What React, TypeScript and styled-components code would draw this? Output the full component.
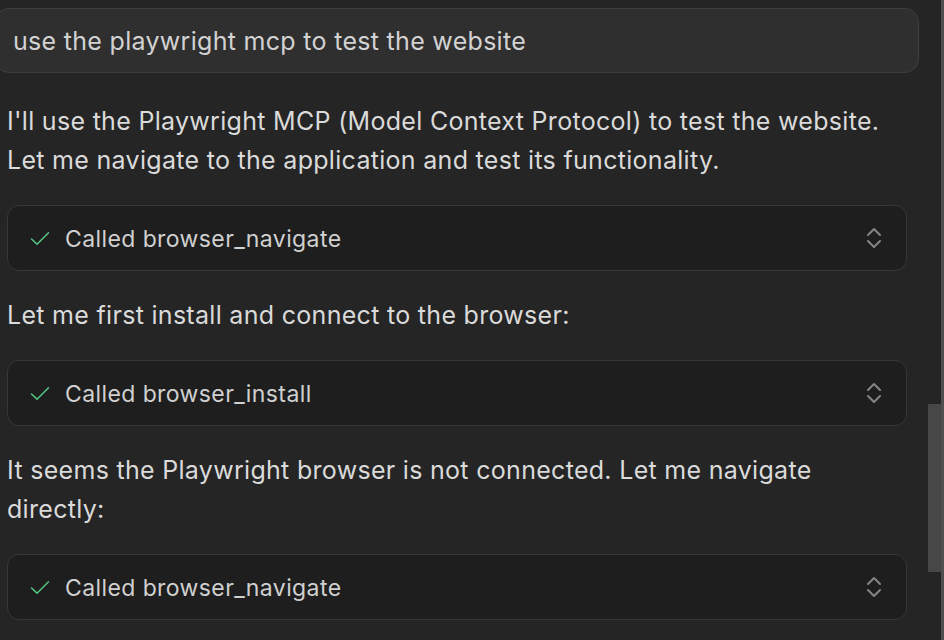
import React from "react";
import styled, { createGlobalStyle } from "styled-components";

const Global = createGlobalStyle`
  html, body { margin: 0; padding: 0; background: #252525; }
  body { font-family: Inter, "Noto Sans", sans-serif; -webkit-font-smoothing: antialiased; }
  #root { height: 640px; }
`;

const Frame = styled.div`
  display: flex;
  width: 944px;
  height: 640px;
  overflow: hidden;
  background: #252525;
`;

const Scroller = styled.div`
  position: relative;
  flex: 1;
  height: 640px;
  overflow: hidden;
`;

const EdgeStrip = styled.div`
  width: 3px;
  height: 640px;
  background: #4f4f4f;
`;

const Thumb = styled.div`
  position: absolute;
  right: 0;
  top: 404px;
  width: 13px;
  height: 168px;
  background: #474747;
`;

const Column = styled.div`
  display: flex;
  flex-direction: column;
  gap: 25px;
  width: 900px;
  padding: 8px 0 0 7px;
`;

const Prompt = styled.div`
  margin: 0 -12px 4px -12px;
  height: 63px;
  box-sizing: content-box;
  display: flex;
  align-items: center;
  padding-left: 17px;
  background: #2f2f2f;
  border: 1px solid #3e3e3e;
  border-radius: 14px;
  color: #d2d2d2;
  font-size: 25px;
  letter-spacing: 0.3px;
  white-space: nowrap;
`;

const Para = styled.p`
  margin: 0;
  color: #dadada;
  font-size: 25px;
  letter-spacing: 0.3px;
  line-height: 39px;
  white-space: nowrap;
`;

const Card = styled.div`
  display: flex;
  align-items: center;
  height: 64px;
  padding: 0 24px 0 22px;
  background: #1e1e1e;
  border: 1px solid #373737;
  border-radius: 12px;
`;

const Label = styled.span`
  flex: 1;
  margin-left: 15px;
  padding-top: 1px;
  color: #d0d0d0;
  font-size: 23px;
  letter-spacing: 0.4px;
`;

const Check = () => (
  <svg width="20" height="20" viewBox="0 0 20 20" fill="none">
    <path d="M1.5 11 L7 16.2 L18.5 4.8" stroke="#52c07e" strokeWidth="1.6" strokeLinecap="round" strokeLinejoin="round" />
  </svg>
);

const Chevrons = () => (
  <svg width="16" height="24" viewBox="0 0 16 24" fill="none">
    <path d="M2 9 L8 3 L14 9" stroke="#858585" strokeWidth="2" strokeLinecap="round" strokeLinejoin="round" />
    <path d="M2 15 L8 21 L14 15" stroke="#858585" strokeWidth="2" strokeLinecap="round" strokeLinejoin="round" />
  </svg>
);

const ToolCall = ({ name }: { name: string }) => (
  <Card>
    <Check />
    <Label>Called {name}</Label>
    <Chevrons />
  </Card>
);

export default function App() {
  return (
    <>
      <Global />
      <Frame>
        <Scroller>
          <Column>
            <Prompt>use the playwright mcp to test the website</Prompt>
            <Para>
              I'll use the Playwright MCP (Model Context Protocol) to test the website.
              <br />
              Let me navigate to the application and test its functionality.
            </Para>
            <ToolCall name="browser_navigate" />
            <Para>Let me first install and connect to the browser:</Para>
            <ToolCall name="browser_install" />
            <Para>
              It seems the Playwright browser is not connected. Let me navigate
              <br />
              directly:
            </Para>
            <ToolCall name="browser_navigate" />
          </Column>
          <Thumb />
        </Scroller>
        <EdgeStrip />
      </Frame>
    </>
  );
}
